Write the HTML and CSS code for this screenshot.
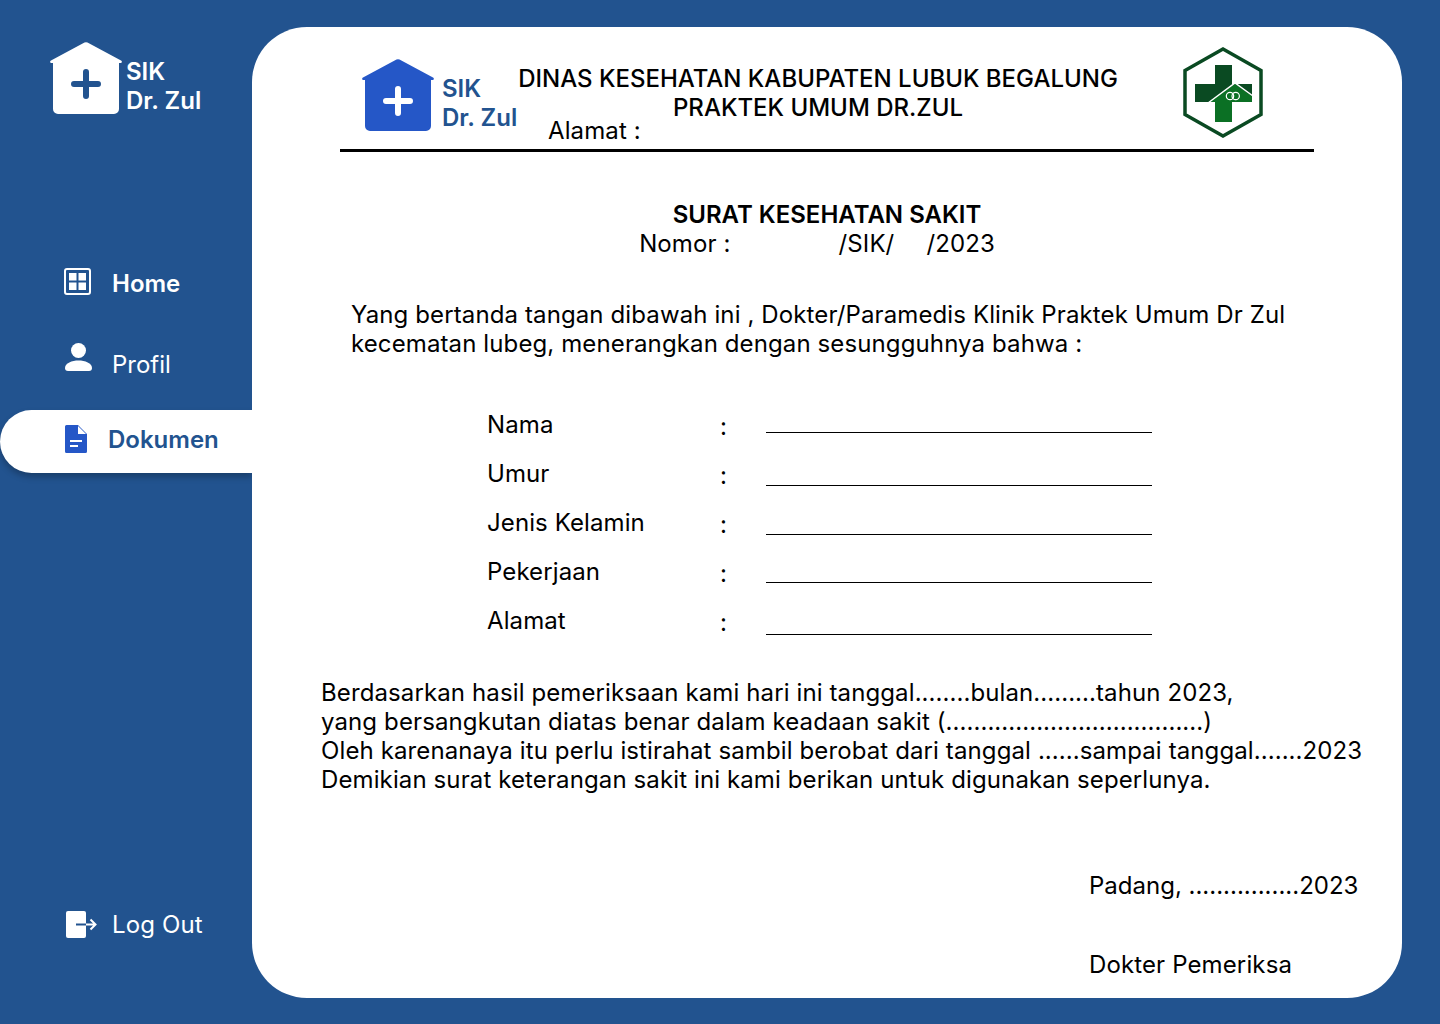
FILE: index.html
```html
<!DOCTYPE html>
<html lang="en">
<head>
  <meta charset="UTF-8">
  <title>SIK Dr. Zul</title>
  <link rel="stylesheet" href="styles.css">
</head>
<body>
<div class="sidebar">
  <div class="brand">
    <svg class="house" viewBox="0 0 72 72"><path fill="#fff" d="M34.500.6 1 18.400C-.4 19.200 0 21 1.600 21H3v46a5 5 0 0 0 5 5h56a5 5 0 0 0 5-5V21h1.400c1.600 0 2-1.800.6-2.600L37.500.6a3 3 0 0 0-3 0Z"/><path stroke="#22538f" stroke-width="6" stroke-linecap="round" d="M36 30v24M24 42h24"/></svg>
    <div class="brand-text">SIK<br>Dr. Zul</div>
  </div>
  <a class="nav nav-home">
    <svg class="ico-home" viewBox="0 0 27 27"><rect x="1" y="1" width="25" height="25" rx="2" fill="none" stroke="#fff" stroke-width="2"/><path fill="#fff" d="M5 5h7.500v7.500H5zM14.500 5H22v7.500h-7.500zM5 14.500h7.500V22H5zM14.500 14.500H22V22h-7.500z"/></svg>
    <span>Home</span>
  </a>
  <a class="nav nav-profil">
    <svg class="ico-user" viewBox="0 0 27 28"><circle cx="13.500" cy="7.500" r="7.500" fill="#fff"/><path fill="#fff" d="M0 25c0-5 7-7.500 13.500-7.500S27 20 27 25c0 2-1 3-3 3H3c-2 0-3-1-3-3Z"/></svg>
    <span>Profil</span>
  </a>
  <a class="nav nav-doc">
    <svg class="ico-doc" viewBox="0 0 22 28"><path fill="#2557c7" d="M1.500 0H13l9 9v17.500a1.500 1.500 0 0 1-1.500 1.500h-19A1.500 1.500 0 0 1 0 26.500v-25A1.500 1.500 0 0 1 1.500 0Z"/><path fill="#fff" d="M13 1l8 8h-8z"/><path stroke="#fff" stroke-width="2" d="M5 16h12M5 21h8"/></svg>
    <span>Dokumen</span>
  </a>
  <a class="nav nav-logout">
    <svg class="ico-out" viewBox="0 0 31 27"><rect width="20" height="27" rx="2" fill="#fff"/><path stroke="#22538f" stroke-width="2" d="M10 13.500h10"/><path stroke="#fff" stroke-width="2" fill="none" d="M20 13.500h9M24.500 8.500l5 5-5 5"/></svg>
    <span>Log Out</span>
  </a>
</div>

<div class="card">
  <div class="head">
    <svg class="house head-house" viewBox="0 0 72 72"><path fill="#2557c7" d="M34.500.6 1 18.400C-.4 19.200 0 21 1.600 21H3v46a5 5 0 0 0 5 5h56a5 5 0 0 0 5-5V21h1.400c1.600 0 2-1.800.6-2.600L37.500.6a3 3 0 0 0-3 0Z"/><path stroke="#fff" stroke-width="6" stroke-linecap="round" d="M36 30v24M24 42h24"/></svg>
    <div class="head-brand">SIK<br>Dr. Zul</div>
    <div class="head-title">
      <div class="head-org">DINAS KESEHATAN KABUPATEN LUBUK BEGALUNG<br>PRAKTEK UMUM DR.ZUL</div>
      <div class="head-addr">Alamat :</div>
    </div>
    <svg class="kemenkes" viewBox="0 0 80 91">
      <path fill="#fff" stroke="#0a4a22" stroke-width="3.500" d="M40 2 78 23.500v44L40 89 2 67.500v-44Z"/>
      <path fill="#0a4a22" d="M32 18h17v19h20v18H12V37h20Z"/>
      <path fill="#0b7024" d="M32 55h17v20H32ZM26 55 52 37l17 12v6Z"/>
      <path fill="none" stroke="#fff" stroke-width="1.500" d="M25 56 52 36l18 13"/>
      <circle cx="47" cy="49" r="3.700" fill="none" stroke="#fff" stroke-width="1.200"/>
      <circle cx="52.700" cy="49" r="3.700" fill="none" stroke="#fff" stroke-width="1.200"/>
    </svg>
  </div>

  <div class="doc-title">SURAT KESEHATAN SAKIT</div>
  <div class="doc-no"><span>Nomor :</span><span class="doc-sik">/SIK/</span><span class="doc-year">/2023</span></div>

  <p class="intro">Yang bertanda tangan dibawah ini , Dokter/Paramedis Klinik Praktek Umum Dr Zul<br>kecematan lubeg, menerangkan dengan sesungguhnya bahwa :</p>

  <div class="form">
    <div class="row row-nama"><span>Nama</span><span class="colon">:</span><span class="rule"></span></div>
    <div class="row row-umur"><span>Umur</span><span class="colon">:</span><span class="rule"></span></div>
    <div class="row row-jk"><span>Jenis Kelamin</span><span class="colon">:</span><span class="rule"></span></div>
    <div class="row row-kerja"><span>Pekerjaan</span><span class="colon">:</span><span class="rule"></span></div>
    <div class="row row-alamat"><span>Alamat</span><span class="colon">:</span><span class="rule"></span></div>
  </div>

  <p class="body-text">Berdasarkan hasil pemeriksaan kami hari ini tanggal<span class="dots">........</span>bulan<span class="dots">.........</span>tahun 2023,<br>yang bersangkutan diatas benar dalam keadaan sakit (<span class="dots">.....................................</span>)<br>Oleh karenanaya itu perlu istirahat sambil berobat dari tanggal <span class="dots">......</span>sampai tanggal<span class="dots">.......</span>2023<br>Demikian surat keterangan sakit ini kami berikan untuk digunakan seperlunya.</p>

  <div class="sign">
    <div class="sign-place">Padang, ................2023</div>
    <div class="sign-name">Dokter Pemeriksa</div>
  </div>
</div>
</body>
</html>
```

FILE: styles.css
```css
* {
  margin: 0;
  padding: 0;
  box-sizing: border-box;
}

body {
  width: 1440px;
  height: 1024px;
  overflow: hidden;
  display: flex;
  background: #22538f;
  font-family: Inter, "Liberation Sans", sans-serif;
  font-size: 24px;
  line-height: 29px;
  color: #000;
}

/* sidebar */
.sidebar {
  width: 252px;
  flex: none;
  display: flex;
  flex-direction: column;
  padding-top: 42px;
  color: #fff;
}

.brand {
  display: flex;
  gap: 4px;
  padding-left: 50px;
}

.house {
  width: 72px;
  height: 72px;
  flex: none;
  display: block;
}

.brand-text {
  padding-top: 15px;
  font-weight: 600;
}

.nav {
  display: flex;
  align-items: center;
}

.nav svg {
  display: block;
  flex: none;
}

.nav-home {
  margin-top: 153px;
  padding-left: 64px;
  font-weight: 600;
  gap: 21px;
  height: 27px;
}

.nav-home span {
  padding-top: 4px;
}

.ico-home {
  width: 27px;
  height: 27px;
}

.nav-profil {
  margin-top: 48px;
  padding-left: 65px;
  gap: 20px;
  height: 28px;
}

.nav-profil span {
  padding-top: 14px;
}

.ico-user {
  width: 27px;
  height: 28px;
}

.nav-doc {
  margin-top: 39px;
  height: 63px;
  padding-left: 65px;
  gap: 21px;
  background: #fff;
  color: #22538f;
  font-weight: 600;
  border-radius: 32px 0 0 32px;
  box-shadow: 0 4px 6px rgba(0, 0, 0, 0.25);
}

.nav-doc span {
  padding-bottom: 5px;
}

.ico-doc {
  width: 22px;
  height: 28px;
  margin-bottom: 5px;
}

.nav-logout {
  margin-top: auto;
  margin-bottom: 86px;
  padding-left: 66px;
  gap: 15px;
  height: 27px;
  letter-spacing: 0.12px;
}

.ico-out {
  width: 31px;
  height: 27px;
}

/* card */
.card {
  width: 1150px;
  height: 971px;
  margin-top: 27px;
  background: #fff;
  border-radius: 55px;
  overflow: hidden;
}

.head {
  display: flex;
  align-items: flex-start;
  height: 105px;
  margin: 20px 88px 0;
  border-bottom: 3px solid #000;
  padding-left: 22px;
}

.head-house {
  margin-top: 12px;
}

.head-brand {
  margin: 27px 0 0 8px;
  width: 76px;
  flex: none;
  color: #22538f;
  font-weight: 600;
}

.head-title {
  margin-top: 17px;
  width: 600px;
  flex: none;
}

.head-org {
  font-weight: 500;
  text-align: center;
  white-space: nowrap;
}

.head-addr {
  padding-left: 30px;
  margin-top: -6px;
  letter-spacing: 0.115px;
}

.kemenkes {
  width: 80px;
  height: 91px;
  flex: none;
  margin-left: 65px;
}

.doc-title {
  margin-top: 48px;
  text-align: center;
  font-weight: 600;
}

.doc-no {
  display: flex;
  justify-content: center;
  padding-right: 20px;
  letter-spacing: 0.115px;
}

.doc-sik {
  margin-left: 108px;
}

.doc-year {
  margin-left: 32px;
}

.intro {
  margin: 42px 0 0 99px;
  white-space: nowrap;
  letter-spacing: 0.115px;
}

.form {
  margin: 52px 0 0 235px;
  letter-spacing: 0.1px;
}

.row {
  display: grid;
  grid-template-columns: 233px 46px 386px;
  height: 49px;
}

.colon {
  padding-top: 2px;
}

.rule {
  height: 1px;
  background: #000;
}

.row-nama .rule { margin-top: 22px; }
.row-umur .rule { margin-top: 26px; }
.row-jk .rule { margin-top: 26px; }
.row-kerja .rule { margin-top: 25px; }
.row-alamat .rule { margin-top: 28px; }

.body-text {
  margin: 23px 0 0 69px;
  white-space: nowrap;
  letter-spacing: 0.115px;
}

.dots {
  letter-spacing: 0.05px;
}

.sign {
  margin: 77px 0 0 837px;
  white-space: nowrap;
}

.sign-name {
  margin-top: 50px;
  letter-spacing: 0.125px;
}
```
